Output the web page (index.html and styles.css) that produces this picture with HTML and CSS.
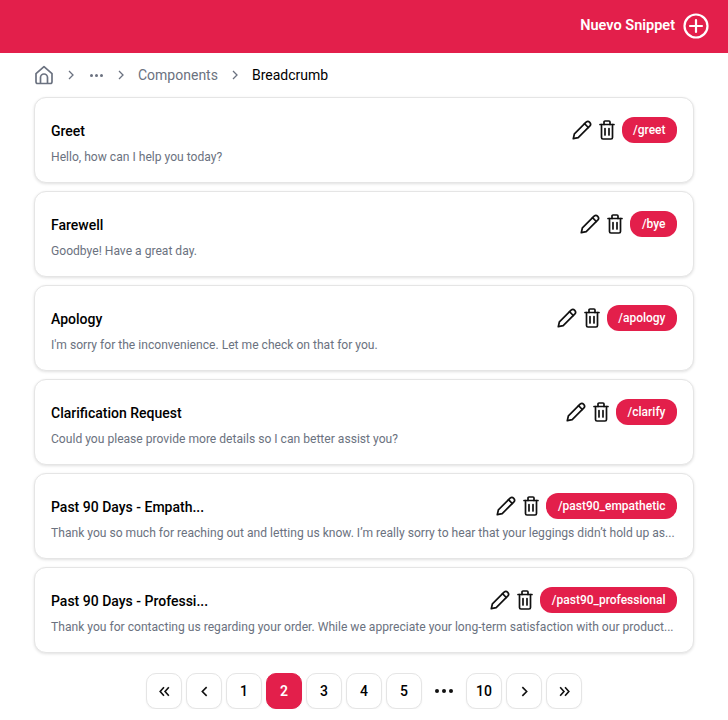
FILE: index.html
```html
<!DOCTYPE html>
<html lang="es">
<head>
    <meta charset="UTF-8">
    <meta name="viewport" content="width=device-width, initial-scale=1.0">
    <title>Snippets</title>
    <link rel="stylesheet" href="styles.css">
</head>
<body>
    <svg class="sprites" width="0" height="0">
        <symbol id="pencil" viewBox="0 0 20 20">
            <path d="M1.300 18.700l1.100-4.900L14.100 2.100a2.700 2.700 0 0 1 3.800 3.800L6.200 17.600z"/>
            <path d="M12.500 3.700l3.800 3.800"/>
        </symbol>
        <symbol id="trash" viewBox="0 0 16 20">
            <path d="M1 4.500h14"/>
            <path d="M5 4.500V2a1 1 0 0 1 1-1h4a1 1 0 0 1 1 1v2.500"/>
            <path d="M2.500 4.500V17.500a1.500 1.500 0 0 0 1.500 1.500h8a1.500 1.500 0 0 0 1.500-1.500V4.500"/>
            <path d="M6 8.500v6.500M10 8.500v6.500"/>
        </symbol>
    </svg>

    <header class="topbar">
        <span class="topbar-label">Nuevo Snippet</span>
        <svg class="topbar-plus" viewBox="0 0 26 26">
            <circle cx="13" cy="13" r="11.500"/>
            <path d="M13 7v12M7 13h12"/>
        </svg>
    </header>

    <main class="content">
        <nav class="breadcrumb">
            <svg class="crumb-home" viewBox="0 0 20 20">
                <path d="M2 8.600L10 1.600l8 7v8.200a1.700 1.700 0 0 1-1.700 1.700H3.700A1.700 1.700 0 0 1 2 16.800z"/>
                <path d="M6.500 18.500v-6a3.500 3.500 0 0 1 7 0v6"/>
            </svg>
            <svg class="crumb-sep" viewBox="0 0 8 10"><path d="M2 1l4 4-4 4"/></svg>
            <span class="crumb-dots"><i></i><i></i><i></i></span>
            <svg class="crumb-sep" viewBox="0 0 8 10"><path d="M2 1l4 4-4 4"/></svg>
            <span class="crumb">Components</span>
            <svg class="crumb-sep" viewBox="0 0 8 10"><path d="M2 1l4 4-4 4"/></svg>
            <span class="crumb crumb-current">Breadcrumb</span>
        </nav>

        <section class="snippets">
            <article class="snippet">
                <div class="snippet-head">
                    <h3 class="snippet-title">Greet</h3>
                    <div class="snippet-actions">
                        <svg class="icon icon-pencil"><use href="#pencil"/></svg>
                        <svg class="icon icon-trash"><use href="#trash"/></svg>
                        <span class="tag">/greet</span>
                    </div>
                </div>
                <p class="snippet-text">Hello, how can I help you today?</p>
            </article>
            <article class="snippet">
                <div class="snippet-head">
                    <h3 class="snippet-title">Farewell</h3>
                    <div class="snippet-actions">
                        <svg class="icon icon-pencil"><use href="#pencil"/></svg>
                        <svg class="icon icon-trash"><use href="#trash"/></svg>
                        <span class="tag">/bye</span>
                    </div>
                </div>
                <p class="snippet-text">Goodbye! Have a great day.</p>
            </article>
            <article class="snippet">
                <div class="snippet-head">
                    <h3 class="snippet-title">Apology</h3>
                    <div class="snippet-actions">
                        <svg class="icon icon-pencil"><use href="#pencil"/></svg>
                        <svg class="icon icon-trash"><use href="#trash"/></svg>
                        <span class="tag">/apology</span>
                    </div>
                </div>
                <p class="snippet-text">I'm sorry for the inconvenience. Let me check on that for you.</p>
            </article>
            <article class="snippet">
                <div class="snippet-head">
                    <h3 class="snippet-title">Clarification Request</h3>
                    <div class="snippet-actions">
                        <svg class="icon icon-pencil"><use href="#pencil"/></svg>
                        <svg class="icon icon-trash"><use href="#trash"/></svg>
                        <span class="tag">/clarify</span>
                    </div>
                </div>
                <p class="snippet-text">Could you please provide more details so I can better assist you?</p>
            </article>
            <article class="snippet">
                <div class="snippet-head">
                    <h3 class="snippet-title">Past 90 Days - Empath...</h3>
                    <div class="snippet-actions">
                        <svg class="icon icon-pencil"><use href="#pencil"/></svg>
                        <svg class="icon icon-trash"><use href="#trash"/></svg>
                        <span class="tag">/past90_empathetic</span>
                    </div>
                </div>
                <p class="snippet-text">Thank you so much for reaching out and letting us know. I’m really sorry to hear that your leggings didn’t hold up as...</p>
            </article>
            <article class="snippet">
                <div class="snippet-head">
                    <h3 class="snippet-title">Past 90 Days - Professi...</h3>
                    <div class="snippet-actions">
                        <svg class="icon icon-pencil"><use href="#pencil"/></svg>
                        <svg class="icon icon-trash"><use href="#trash"/></svg>
                        <span class="tag">/past90_professional</span>
                    </div>
                </div>
                <p class="snippet-text">Thank you for contacting us regarding your order. While we appreciate your long-term satisfaction with our product...</p>
            </article>
        </section>

        <nav class="pagination">
            <a class="page"><svg class="page-arrow" viewBox="0 0 12 12"><path d="M5.500 2L2 6l3.500 4M10 2L6.500 6l3.500 4"/></svg></a>
            <a class="page"><svg class="page-arrow" viewBox="0 0 12 12"><path d="M8 2L4 6l4 4"/></svg></a>
            <a class="page">1</a>
            <a class="page page-active">2</a>
            <a class="page">3</a>
            <a class="page">4</a>
            <a class="page">5</a>
            <span class="page-gap"><i></i><i></i><i></i></span>
            <a class="page">10</a>
            <a class="page"><svg class="page-arrow" viewBox="0 0 12 12"><path d="M4 2l4 4-4 4"/></svg></a>
            <a class="page"><svg class="page-arrow" viewBox="0 0 12 12"><path d="M2 2l3.500 4L2 10M6.500 2L10 6l-3.500 4"/></svg></a>
        </nav>
    </main>
</body>
</html>
```

FILE: styles.css
```css
* {
    box-sizing: border-box;
}
body {
    margin: 0;
    background: #fff;
    font-family: Roboto, "Noto Sans", sans-serif;
    color: #000;
}
.sprites {
    position: absolute;
}
.topbar {
    height: 53px;
    background: #e31f4b;
    display: flex;
    align-items: center;
    justify-content: flex-end;
    gap: 8px;
    padding: 0 19px 2px 0;
    color: #fff;
}
.topbar-label {
    font-size: 14.500px;
    font-weight: 600;
}
.topbar-plus {
    width: 26px;
    height: 26px;
    fill: none;
    stroke: #fff;
    stroke-width: 2.200;
    stroke-linecap: round;
}
.content {
    padding: 0 34px;
}
.breadcrumb {
    height: 44px;
    display: flex;
    align-items: center;
    font-size: 14px;
}
.crumb-home {
    width: 20px;
    height: 20px;
    fill: none;
    stroke: #6b7280;
    stroke-width: 1.700;
    stroke-linejoin: round;
}
.crumb-sep {
    width: 8px;
    height: 10px;
    margin: 0 13px;
    fill: none;
    stroke: #6b7280;
    stroke-width: 1.300;
}
.crumb-dots {
    display: flex;
    gap: 2px;
    margin: 0 1px 0 2px;
}
.crumb-dots i {
    width: 3px;
    height: 3px;
    border-radius: 50%;
    background: #6b7280;
}
.crumb {
    color: #6b7280;
}
.crumb-current {
    color: #000;
}
.snippets {
    display: flex;
    flex-direction: column;
    gap: 8px;
}
.snippet {
    height: 86px;
    padding: 19px 16px 0;
    background: #fff;
    border: 1px solid #e5e5e5;
    border-radius: 12px;
    box-shadow: 0 1px 3px rgba(0,0,0,0.12);
}
.snippet-head {
    height: 26px;
    display: flex;
    align-items: center;
    justify-content: space-between;
}
.snippet-title {
    margin: 2px 0 0;
    font-size: 14px;
    font-weight: 500;
}
.snippet-actions {
    display: flex;
    align-items: center;
    gap: 7px;
}
.icon {
    height: 20px;
    fill: none;
    stroke: #111;
    stroke-width: 1.700;
    stroke-linecap: round;
    stroke-linejoin: round;
}
.icon-pencil {
    width: 20px;
}
.icon-trash {
    width: 16px;
}
.tag {
    height: 26px;
    padding: 0 11.500px;
    display: flex;
    align-items: center;
    background: #e31f4b;
    border-radius: 12px;
    color: #fff;
    font-size: 12px;
    font-weight: 500;
}
.snippet-text {
    margin: 5px 0 0;
    font-size: 12.100px;
    line-height: 18px;
    color: #6b7280;
    white-space: nowrap;
}
.pagination {
    display: flex;
    justify-content: center;
    gap: 4px;
    margin-top: 20px;
}
.page {
    width: 36px;
    height: 36px;
    display: flex;
    align-items: center;
    justify-content: center;
    border: 1px solid #e5e5e5;
    border-radius: 10px;
    background: #fff;
    box-shadow: 0 1px 2px rgba(0,0,0,0.05);
    font-size: 14px;
    font-weight: 500;
}
.page-active {
    background: #e31f4b;
    border-color: #e31f4b;
    color: #fff;
    font-weight: 600;
}
.page-arrow {
    width: 13px;
    height: 13px;
    fill: none;
    stroke: #111;
    stroke-width: 1.500;
}
.page-gap {
    width: 36px;
    height: 36px;
    display: flex;
    align-items: center;
    justify-content: center;
    gap: 3px;
}
.page-gap i {
    width: 4px;
    height: 4px;
    border-radius: 50%;
    background: #111;
}
```
